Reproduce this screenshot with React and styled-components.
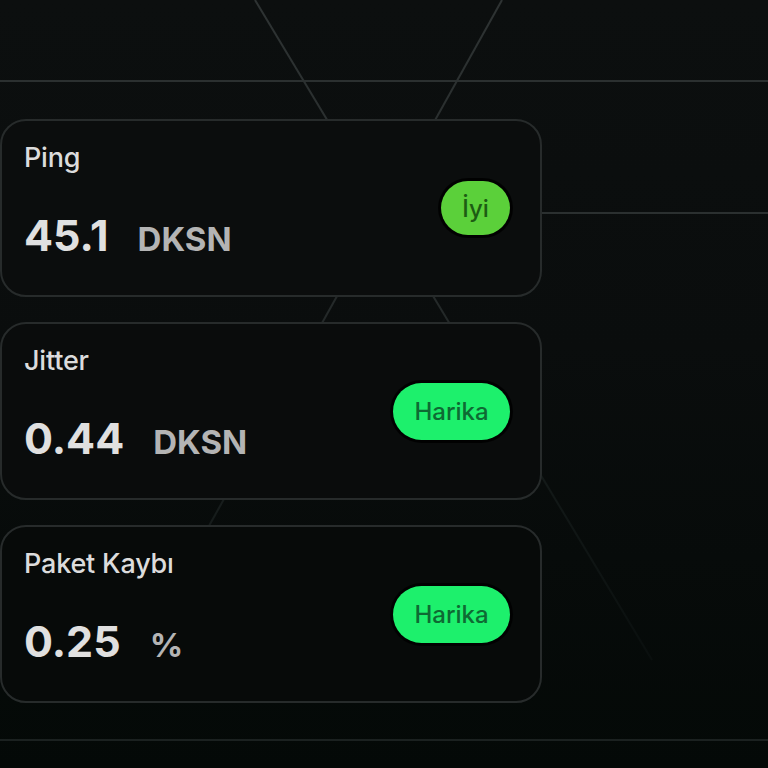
import React from "react";
import styled, { createGlobalStyle } from "styled-components";

const Global = createGlobalStyle`
  html, body {
    margin: 0;
    padding: 0;
    background: #0b0e0e;
  }
  * { box-sizing: border-box; }
`;

const Screen = styled.div`
  position: relative;
  width: 768px;
  height: 768px;
  overflow: hidden;
  background: linear-gradient(180deg, #0c0f0f 0%, #0a0d0d 45%, #040907 100%);
  font-family: Inter, "Noto Sans", sans-serif;
`;

const Backdrop = styled.svg`
  position: absolute;
  inset: 0;
  width: 768px;
  height: 768px;
  pointer-events: none;
`;

const Stack = styled.div`
  position: relative;
  display: flex;
  flex-direction: column;
  gap: 25px;
  padding-top: 119px;
`;

const Card = styled.section`
  width: 542px;
  height: 178px;
  border: 2px solid #272b2b;
  border-radius: 26px;
  background: ${(p) => p.$bg};
  padding: 23px 30px 0 22px;
  display: flex;
  align-items: center;
  justify-content: space-between;
`;

const Info = styled.div`
  display: flex;
  flex-direction: column;
  align-self: flex-start;
`;

const Label = styled.div`
  font-size: 27px;
  font-weight: 500;
  line-height: 28px;
  color: #dcdcdc;
  letter-spacing: -0.2px;
`;

const Reading = styled.div`
  display: flex;
  align-items: baseline;
  gap: 29px;
  margin-top: 39px;
`;

const Value = styled.span`
  font-size: 43px;
  font-weight: 700;
  line-height: 48px;
  color: #e0e0e0;
  letter-spacing: 0;
`;

const Unit = styled.span`
  font-size: 33px;
  font-weight: 700;
  color: #b4b4b4;
`;

const Badge = styled.span`
  display: inline-flex;
  align-items: center;
  justify-content: center;
  height: ${(p) => (p.$tone === "good" ? 54 : 57)}px;
  min-width: ${(p) => (p.$tone === "good" ? 69 : 117)}px;
  padding: 0 ${(p) => (p.$tone === "good" ? 14 : 18)}px;
  margin-top: -23px;
  border-radius: 30px;
  background: ${(p) => (p.$tone === "good" ? "#5bd03a" : "#1df06c")};
  color: ${(p) => (p.$tone === "good" ? "#1d5c13" : "#0e6a33")};
  box-shadow: 0 0 0 3px rgba(0, 0, 0, 0.85);
  font-size: 24px;
  font-weight: 500;
`;

const metrics = [
  { label: "Ping", value: "45.1", unit: "DKSN", status: "İyi", tone: "good", bg: "#0b0d0d" },
  { label: "Jitter", value: "0.44", unit: "DKSN", status: "Harika", tone: "great", bg: "#0a0c0c" },
  { label: "Paket Kaybı", value: "0.25", unit: "%", status: "Harika", tone: "great", bg: "#070a09" },
];

function Lines() {
  return (
    <Backdrop viewBox="0 0 768 768">
      <defs>
        <linearGradient id="fadeA" gradientUnits="userSpaceOnUse" x1="0" y1="0" x2="0" y2="660">
          <stop offset="0" stopColor="#2e3333" />
          <stop offset="0.45" stopColor="#252a2a" />
          <stop offset="0.75" stopColor="#121817" />
          <stop offset="1" stopColor="#0a0f0e" />
        </linearGradient>
        <linearGradient id="fadeB" gradientUnits="userSpaceOnUse" x1="0" y1="0" x2="0" y2="560">
          <stop offset="0" stopColor="#2e3333" />
          <stop offset="0.55" stopColor="#242929" />
          <stop offset="1" stopColor="#131918" />
        </linearGradient>
      </defs>
      <line x1="0" y1="81" x2="768" y2="81" stroke="#2b3030" strokeWidth="2" />
      <line x1="542" y1="213" x2="768" y2="213" stroke="#2b3030" strokeWidth="2" />
      <line x1="0" y1="740" x2="768" y2="740" stroke="#1b2120" strokeWidth="2" />
      <line x1="255" y1="0" x2="652" y2="660" stroke="url(#fadeA)" strokeWidth="2" />
      <line x1="502" y1="0" x2="190" y2="560" stroke="url(#fadeB)" strokeWidth="2" />
    </Backdrop>
  );
}

export default function App() {
  return (
    <>
      <Global />
      <Screen>
        <Lines />
        <Stack>
          {metrics.map((m) => (
            <Card key={m.label} $bg={m.bg}>
              <Info>
                <Label>{m.label}</Label>
                <Reading>
                  <Value>{m.value}</Value>
                  <Unit>{m.unit}</Unit>
                </Reading>
              </Info>
              <Badge $tone={m.tone}>{m.status}</Badge>
            </Card>
          ))}
        </Stack>
      </Screen>
    </>
  );
}
